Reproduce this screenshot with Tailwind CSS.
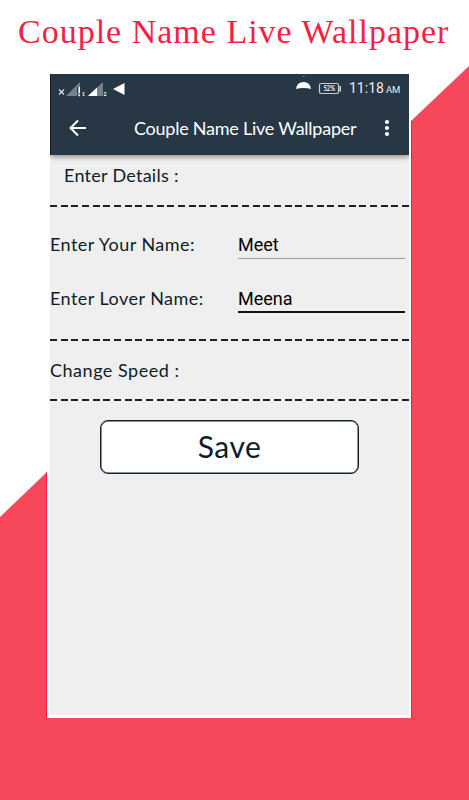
<!DOCTYPE html>
<html lang="en">
<head>
    <meta charset="UTF-8">
    <meta name="viewport" content="width=device-width,initial-scale=1">
    <title>Couple Name Live Wallpaper</title>
    <script src="https://cdn.jsdelivr.net/npm/@tailwindcss/browser@4"></script>
</head>
<body class="bg-white">
    <div class="relative isolate w-[469px] h-[800px] overflow-hidden font-['Lato',sans-serif] text-[#101c2a]">
        <!-- diagonal red backdrop -->
        <svg class="absolute inset-0 -z-10" width="469" height="800" viewBox="0 0 469 800">
            <path d="M469 66V800H0V517L47 472V718H411V121Z" fill="#f7475b"/>
            <path d="M46.500 472V718M411.500 121V718" fill="none" stroke="#fa1743" stroke-width="1"/>
        </svg>

        <h1 class="h-[74px] pt-[12px] pl-[18px] whitespace-nowrap font-['Liberation_Serif',serif] text-[34px] leading-[40px] tracking-[1px] text-[#f61f43]">Couple Name Live Wallpaper</h1>

        <main class="ml-[50px] w-[359px] h-[641px] bg-[#efefef] overflow-hidden">
            <header class="h-[81px] bg-[#273746] text-white shadow-[0_2px_5px_rgba(0,0,0,0.4)] border-l border-[#101b25]">
                <div class="flex items-center h-[30px]">
                    <svg width="80" height="30" viewBox="51 74 80 30">
                        <path d="M59 89.500l5 5M64 89.500l-5 5" stroke="#e4e7e9" stroke-width="1.100"/>
                        <path d="M66 96L80 82V96Z" fill="#76818b"/>
                        <path d="M79 87V93M79 94.500V96.500" stroke="#273746" stroke-width="4"/>
                        <path d="M79.200 87V93M79.200 94.500V96.300" stroke="#fff" stroke-width="1.700"/>
                        <path d="M88 96L103 82V96Z" fill="#76818b"/>
                        <path d="M88 96L97 87.500V96Z" fill="#fff"/>
                        <text x="82" y="95.500" font-size="5" font-weight="bold" fill="#fff">1</text>
                        <text x="103.500" y="95.500" font-size="5" font-weight="bold" fill="#fff">2</text>
                        <path d="M113 89L124.500 83V95Z" fill="#fff"/>
                    </svg>
                    <svg class="ml-[164px]" width="50" height="30" viewBox="295 74 50 30">
                        <path d="M296 89Q297 82 303.500 82T311 89Q308 88 303.500 88T296 89Z" fill="#fff"/>
                        <rect x="302.500" y="76" width="2" height="1" fill="#68747f"/>
                        <rect x="319.500" y="83.500" width="19" height="10" rx="1.500" fill="none" stroke="#c7cccf" stroke-width="1.200"/>
                        <path d="M340.200 86V91.500" stroke="#dadddf" stroke-width="1.500"/>
                        <text x="323.500" y="91.200" textLength="11.500" lengthAdjust="spacingAndGlyphs" font-size="6.500" font-weight="bold" fill="#fff">52%</text>
                    </svg>
                    <div class="ml-[4px] flex items-baseline gap-[2px] font-['Roboto',sans-serif] leading-[30px] text-[#eeeeee]">
                        <span class="text-[14px]">11:18</span>
                        <span class="text-[9.500px]">AM</span>
                    </div>
                </div>
                <div class="flex items-center h-[48px]">
                    <svg class="ml-[17px]" width="20" height="20" viewBox="0 0 20 20" fill="none" stroke="#fff" stroke-width="2">
                        <path d="M18 10H3M10 2.500L2.500 10L10 17.500"/>
                    </svg>
                    <span class="ml-[46px] w-[240px] whitespace-nowrap text-[18px] leading-6 tracking-[-0.24px]">Couple Name Live Wallpaper</span>
                    <svg class="ml-[7px]" width="12" height="20" viewBox="0 0 12 20" fill="#fff">
                        <circle cx="6" cy="4" r="2.100"/>
                        <circle cx="6" cy="10" r="2.100"/>
                        <circle cx="6" cy="16" r="2.100"/>
                    </svg>
                </div>
            </header>

            <section class="h-[50px] pt-[8px] pl-[14px] text-[18px] leading-6 tracking-[0.27px]">Enter Details :</section>
            <div class="h-[2px] bg-[repeating-linear-gradient(90deg,#142230_0_7px,transparent_7px_10.667px)]"></div>

            <section class="h-[132px] pt-[25px] text-[18px] tracking-[0.46px]">
                <div class="flex h-[54px]">
                    <label class="w-[188px] leading-6">Enter Your Name:</label>
                    <div class="w-[167px] h-[27px] pt-px leading-6 border-b border-[#9c9c9c] font-['Roboto',sans-serif] tracking-normal text-black">Meet</div>
                </div>
                <div class="flex h-[53px]">
                    <label class="w-[188px] leading-6">Enter Lover Name:</label>
                    <div class="w-[167px] h-[27px] pt-px leading-6 border-b-2 border-[#111111] font-['Roboto',sans-serif] tracking-normal text-black">Meena</div>
                </div>
            </section>
            <div class="h-[2px] bg-[repeating-linear-gradient(90deg,#142230_0_7px,transparent_7px_10.667px)]"></div>

            <section class="h-[58px] pt-[17px] text-[18px] leading-6 tracking-[0.52px]">Change Speed :</section>
            <div class="h-[2px] bg-[repeating-linear-gradient(90deg,#142230_0_7px,transparent_7px_10.667px)]"></div>

            <button class="block mt-[19px] ml-[50px] w-[259px] h-[54px] pb-[2px] rounded-[8px] border border-[#142230] bg-white shadow-[inset_0_0_0_0.5px_#142230] text-[30px] leading-[50px] tracking-[0.5px]">Save</button>
        </main>
        <!-- white edge of the phone frame -->
        <div class="absolute -z-10 left-[47px] top-[155px] w-[364px] h-[563px] bg-white"></div>
    </div>
</body>
</html>
